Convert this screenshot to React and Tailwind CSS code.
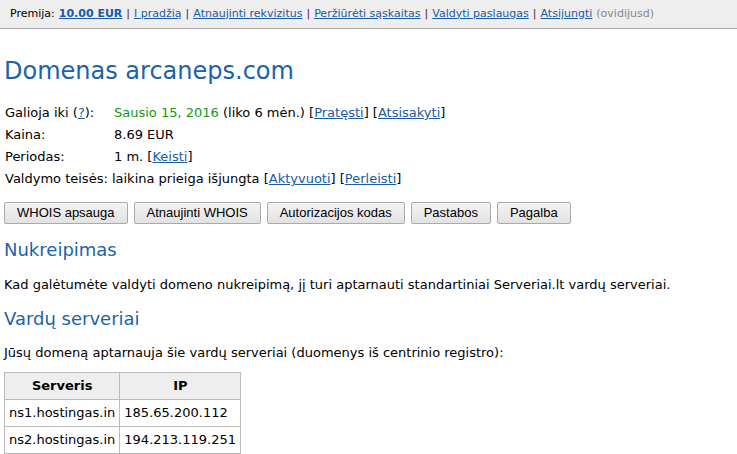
export default function App() {
  const link = "text-[#1a5ba6] underline";
  const sep = <span className="text-[#5a1a4a] mx-[4px]">|</span>;
  const buttons = ["WHOIS apsauga", "Atnaujinti WHOIS", "Autorizacijos kodas", "Pastabos", "Pagalba"];

  return (
    <div className="min-h-[454px] bg-white text-[13px] text-black font-['DejaVu_Sans',Verdana,sans-serif]">
      {/* top bar */}
      <div className="h-[29px] bg-[#eeeeee] border-b border-[#aaaaaa] flex items-center pl-[10px] text-[11px]">
        <span>Premija:</span>
        <a className={`${link} font-bold ml-[4px]`}>10.00 EUR</a>
        {sep}
        <a className={link}>I pradžią</a>
        {sep}
        <a className={link}>Atnaujinti rekvizitus</a>
        {sep}
        <a className={link}>Peržiūrėti sąskaitas</a>
        {sep}
        <a className={link}>Valdyti paslaugas</a>
        {sep}
        <a className={link}>Atsijungti</a>
        <span className="text-[#888] ml-[4px]">(ovidijusd)</span>
      </div>

      <div className="px-[4px]">
        <h1 className="text-[24px] text-[#1a63ac] mt-[27px] leading-[30px]">Domenas arcaneps.com</h1>

        <div className="mt-[16px] flex flex-col">
          <div className="flex h-[22px] items-center">
            <span className="w-[110px] pl-[1px]">Galioja iki (<a className={link}>?</a>):</span>
            <span>
              <span className="text-[#119911]">Sausio 15, 2016</span> (liko 6 mėn.) [<a className={link}>Pratęsti</a>] [<a className={link}>Atsisakyti</a>]
            </span>
          </div>
          <div className="flex h-[22px] items-center">
            <span className="w-[110px] pl-[1px]">Kaina:</span>
            <span>8.69 EUR</span>
          </div>
          <div className="flex h-[22px] items-center">
            <span className="w-[110px] pl-[1px]">Periodas:</span>
            <span>1 m. [<a className={link}>Keisti</a>]</span>
          </div>
          <div className="flex h-[22px] items-center pl-[1px]">
            <span>Valdymo teisės: laikina prieiga išjungta [<a className={link}>Aktyvuoti</a>] [<a className={link}>Perleisti</a>]</span>
          </div>
        </div>

        <div className="flex gap-[6px] mt-[12px]">
          {buttons.map((b) => (
            <button
              key={b}
              className="h-[22px] px-[12px] border border-[#aaaaaa] rounded-[2px] bg-gradient-to-b from-[#f4f4f4] to-[#e2e2e2] text-[13px] font-['Liberation_Sans',Arial,sans-serif] text-black"
            >
              {b}
            </button>
          ))}
        </div>

        <h2 className="text-[18px] text-[#1a63ac] mt-[14px] leading-[24px]">Nukreipimas</h2>
        <p className="mt-[14px] leading-[18px]">
          Kad galėtumėte valdyti domeno nukreipimą, jį turi aptarnauti standartiniai Serveriai.lt vardų serveriai.
        </p>

        <h2 className="text-[18px] text-[#1a63ac] mt-[13px] leading-[24px]">Vardų serveriai</h2>
        <p className="mt-[13px] leading-[18px]">
          Jūsų domeną aptarnauja šie vardų serveriai (duomenys iš centrinio registro):
        </p>

        <table className="mt-[10px] border-collapse border border-[#bbbbbb]">
          <thead>
            <tr className="bg-[#eeeeee] h-[27px]">
              <th className="border border-[#bbbbbb] px-[4px] w-[115px]">Serveris</th>
              <th className="border border-[#bbbbbb] px-[4px] w-[121px]">IP</th>
            </tr>
          </thead>
          <tbody>
            <tr className="h-[27px]">
              <td className="border border-[#bbbbbb] px-[4px]">ns1.hostingas.in</td>
              <td className="border border-[#bbbbbb] px-[4px]">185.65.200.112</td>
            </tr>
            <tr className="h-[27px]">
              <td className="border border-[#bbbbbb] px-[4px]">ns2.hostingas.in</td>
              <td className="border border-[#bbbbbb] px-[4px]">194.213.119.251</td>
            </tr>
          </tbody>
        </table>
      </div>
    </div>
  );
}
